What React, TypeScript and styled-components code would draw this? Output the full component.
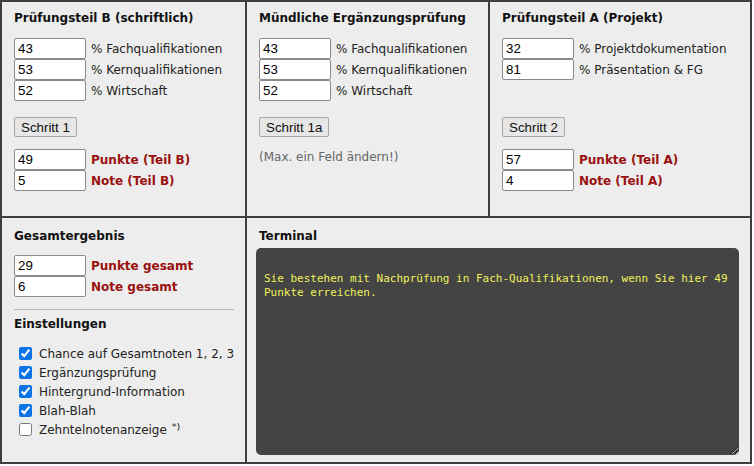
import React from 'react';
import styled, { createGlobalStyle } from 'styled-components';

const GlobalStyle = createGlobalStyle`
    body {
        margin: 0;
        background: #ffffff;
        font-family: 'DejaVu Sans', Verdana, sans-serif;
    }
`;

const Board = styled.div`
    display: grid;
    grid-template-columns: 243px 241px 260px;
    grid-template-rows: 214px 244px;
    gap: 2px;
    padding: 2px;
    width: 752px;
    box-sizing: border-box;
    background: #3f3f3f;
`;

const Cell = styled.div<{ span?: number; top?: number }>`
    grid-column: span ${p => p.span || 1};
    display: flex;
    flex-direction: column;
    background: #ededed;
    padding: ${p => p.top ?? 8}px 10px 0 12px;
    box-sizing: border-box;
    min-width: 0;
`;

const Heading = styled.div<{ gap?: number }>`
    font-weight: bold;
    font-size: 12px;
    line-height: 16px;
    height: 16px;
    color: #111;
    margin-bottom: ${p => p.gap ?? 12}px;
    white-space: nowrap;
`;

const Group = styled.div<{ rows?: number }>`
    display: flex;
    flex-direction: column;
    min-height: ${p => (p.rows || 0) * 21}px;
`;

const Row = styled.div`
    display: flex;
    align-items: center;
    height: 21px;
`;

const Field = styled.input`
    width: 72px;
    height: 21px;
    box-sizing: border-box;
    border: 1px solid #8a8a8a;
    border-radius: 2px;
    padding: 1px 3px;
    font-family: 'Liberation Sans', Arial, sans-serif;
    font-size: 13.33px;
    color: #000;
    background: #fff;
    margin: 0 5px 0 0;
    outline: none;
`;

const Label = styled.span<{ result?: boolean }>`
    font-size: 12px;
    white-space: nowrap;
    color: ${p => (p.result ? '#9a0f0f' : '#222')};
    font-weight: ${p => (p.result ? 'bold' : 'normal')};
`;

const Step = styled.button`
    align-self: flex-start;
    height: 20px;
    margin: 16px 0 12px 0;
    padding: 0 6px;
    font-family: 'Liberation Sans', Arial, sans-serif;
    font-size: 13.33px;
    color: #111;
    background: #e6e6e6;
    border: 1px solid #a6a6a6;
    border-radius: 2px;
`;

const Hint = styled.div`
    font-size: 12px;
    color: #666;
    line-height: 16px;
`;

const Rule = styled.hr`
    border: none;
    border-top: 1px solid #b9b9b9;
    margin: 12px 0 6px 0;
    width: 220px;
`;

const Options = styled.div`
    display: flex;
    flex-direction: column;
    margin-top: 1px;
`;

const Option = styled.label`
    display: flex;
    align-items: center;
    height: 19px;
    font-size: 12px;
    color: #222;
    white-space: nowrap;
`;

const Check = styled.input`
    width: 13px;
    height: 13px;
    margin: 0 7px 0 5px;
    accent-color: #0a74e6;
`;

const Sup = styled.sup`
    font-size: 9.5px;
    margin-left: 5px;
    position: relative;
    top: -3px;
`;

const Terminal = styled.textarea`
    height: 207px;
    width: 483px;
    box-sizing: border-box;
    margin-left: -3px;
    padding: 10px 8px 8px 8px;
    border: none;
    border-radius: 5px;
    background: #444444;
    color: #f2f25a;
    font-family: 'DejaVu Sans Mono', monospace;
    font-size: 11px;
    line-height: 14px;
    outline: none;
`;

type InputRow = { value: string; label: string; result?: boolean };

const Inputs: React.FC<{ items: InputRow[]; rows?: number }> = ({ items, rows }) => (
    <Group rows={rows}>
        {items.map(it => (
            <Row key={it.label}>
                <Field defaultValue={it.value} />
                <Label result={it.result}>{it.label}</Label>
            </Row>
        ))}
    </Group>
);

const fach = [
    { value: '43', label: '% Fachqualifikationen' },
    { value: '53', label: '% Kernqualifikationen' },
    { value: '52', label: '% Wirtschaft' },
];

const fachMuendlich = [
    { value: '43', label: '% Fachqualifikationen' },
    { value: '53', label: '% Kernqualifikationen' },
    { value: '52', label: '% Wirtschaft' },
];

const settings = [
    { label: 'Chance auf Gesamtnoten 1, 2, 3', on: true },
    { label: 'Ergänzungsprüfung', on: true },
    { label: 'Hintergrund-Information', on: true },
    { label: 'Blah-Blah', on: true },
    { label: 'Zehntelnotenanzeige', on: false, note: true },
];

const message =
    '\nSie bestehen mit Nachprüfung in Fach-Qualifikationen, wenn Sie hier 49 Punkte erreichen.';

const App: React.FC = () => {
    return (
        <>
            <GlobalStyle />
            <Board>
                <Cell>
                    <Heading>Prüfungsteil B (schriftlich)</Heading>
                    <Inputs items={fach} rows={3} />
                    <Step>Schritt 1</Step>
                    <Inputs
                        items={[
                            { value: '49', label: 'Punkte (Teil B)', result: true },
                            { value: '5', label: 'Note (Teil B)', result: true },
                        ]}
                    />
                </Cell>
                <Cell>
                    <Heading>Mündliche Ergänzungsprüfung</Heading>
                    <Inputs items={fachMuendlich} rows={3} />
                    <Step>Schritt 1a</Step>
                    <Hint>(Max. ein Feld ändern!)</Hint>
                </Cell>
                <Cell>
                    <Heading>Prüfungsteil A (Projekt)</Heading>
                    <Inputs
                        rows={3}
                        items={[
                            { value: '32', label: '% Projektdokumentation' },
                            { value: '81', label: '% Präsentation & FG' },
                        ]}
                    />
                    <Step>Schritt 2</Step>
                    <Inputs
                        items={[
                            { value: '57', label: 'Punkte (Teil A)', result: true },
                            { value: '4', label: 'Note (Teil A)', result: true },
                        ]}
                    />
                </Cell>
                <Cell top={10}>
                    <Heading gap={11}>Gesamtergebnis</Heading>
                    <Inputs
                        items={[
                            { value: '29', label: 'Punkte gesamt', result: true },
                            { value: '6', label: 'Note gesamt', result: true },
                        ]}
                    />
                    <Rule />
                    <Heading gap={11}>Einstellungen</Heading>
                    <Options>
                        {settings.map(s => (
                            <Option key={s.label}>
                                <Check type="checkbox" defaultChecked={s.on} />
                                {s.label}
                                {s.note && <Sup>*)</Sup>}
                            </Option>
                        ))}
                    </Options>
                </Cell>
                <Cell span={2} top={10}>
                    <Heading gap={4}>Terminal</Heading>
                    <Terminal readOnly defaultValue={message} spellCheck={false} />
                </Cell>
            </Board>
        </>
    );
};

export default App;
